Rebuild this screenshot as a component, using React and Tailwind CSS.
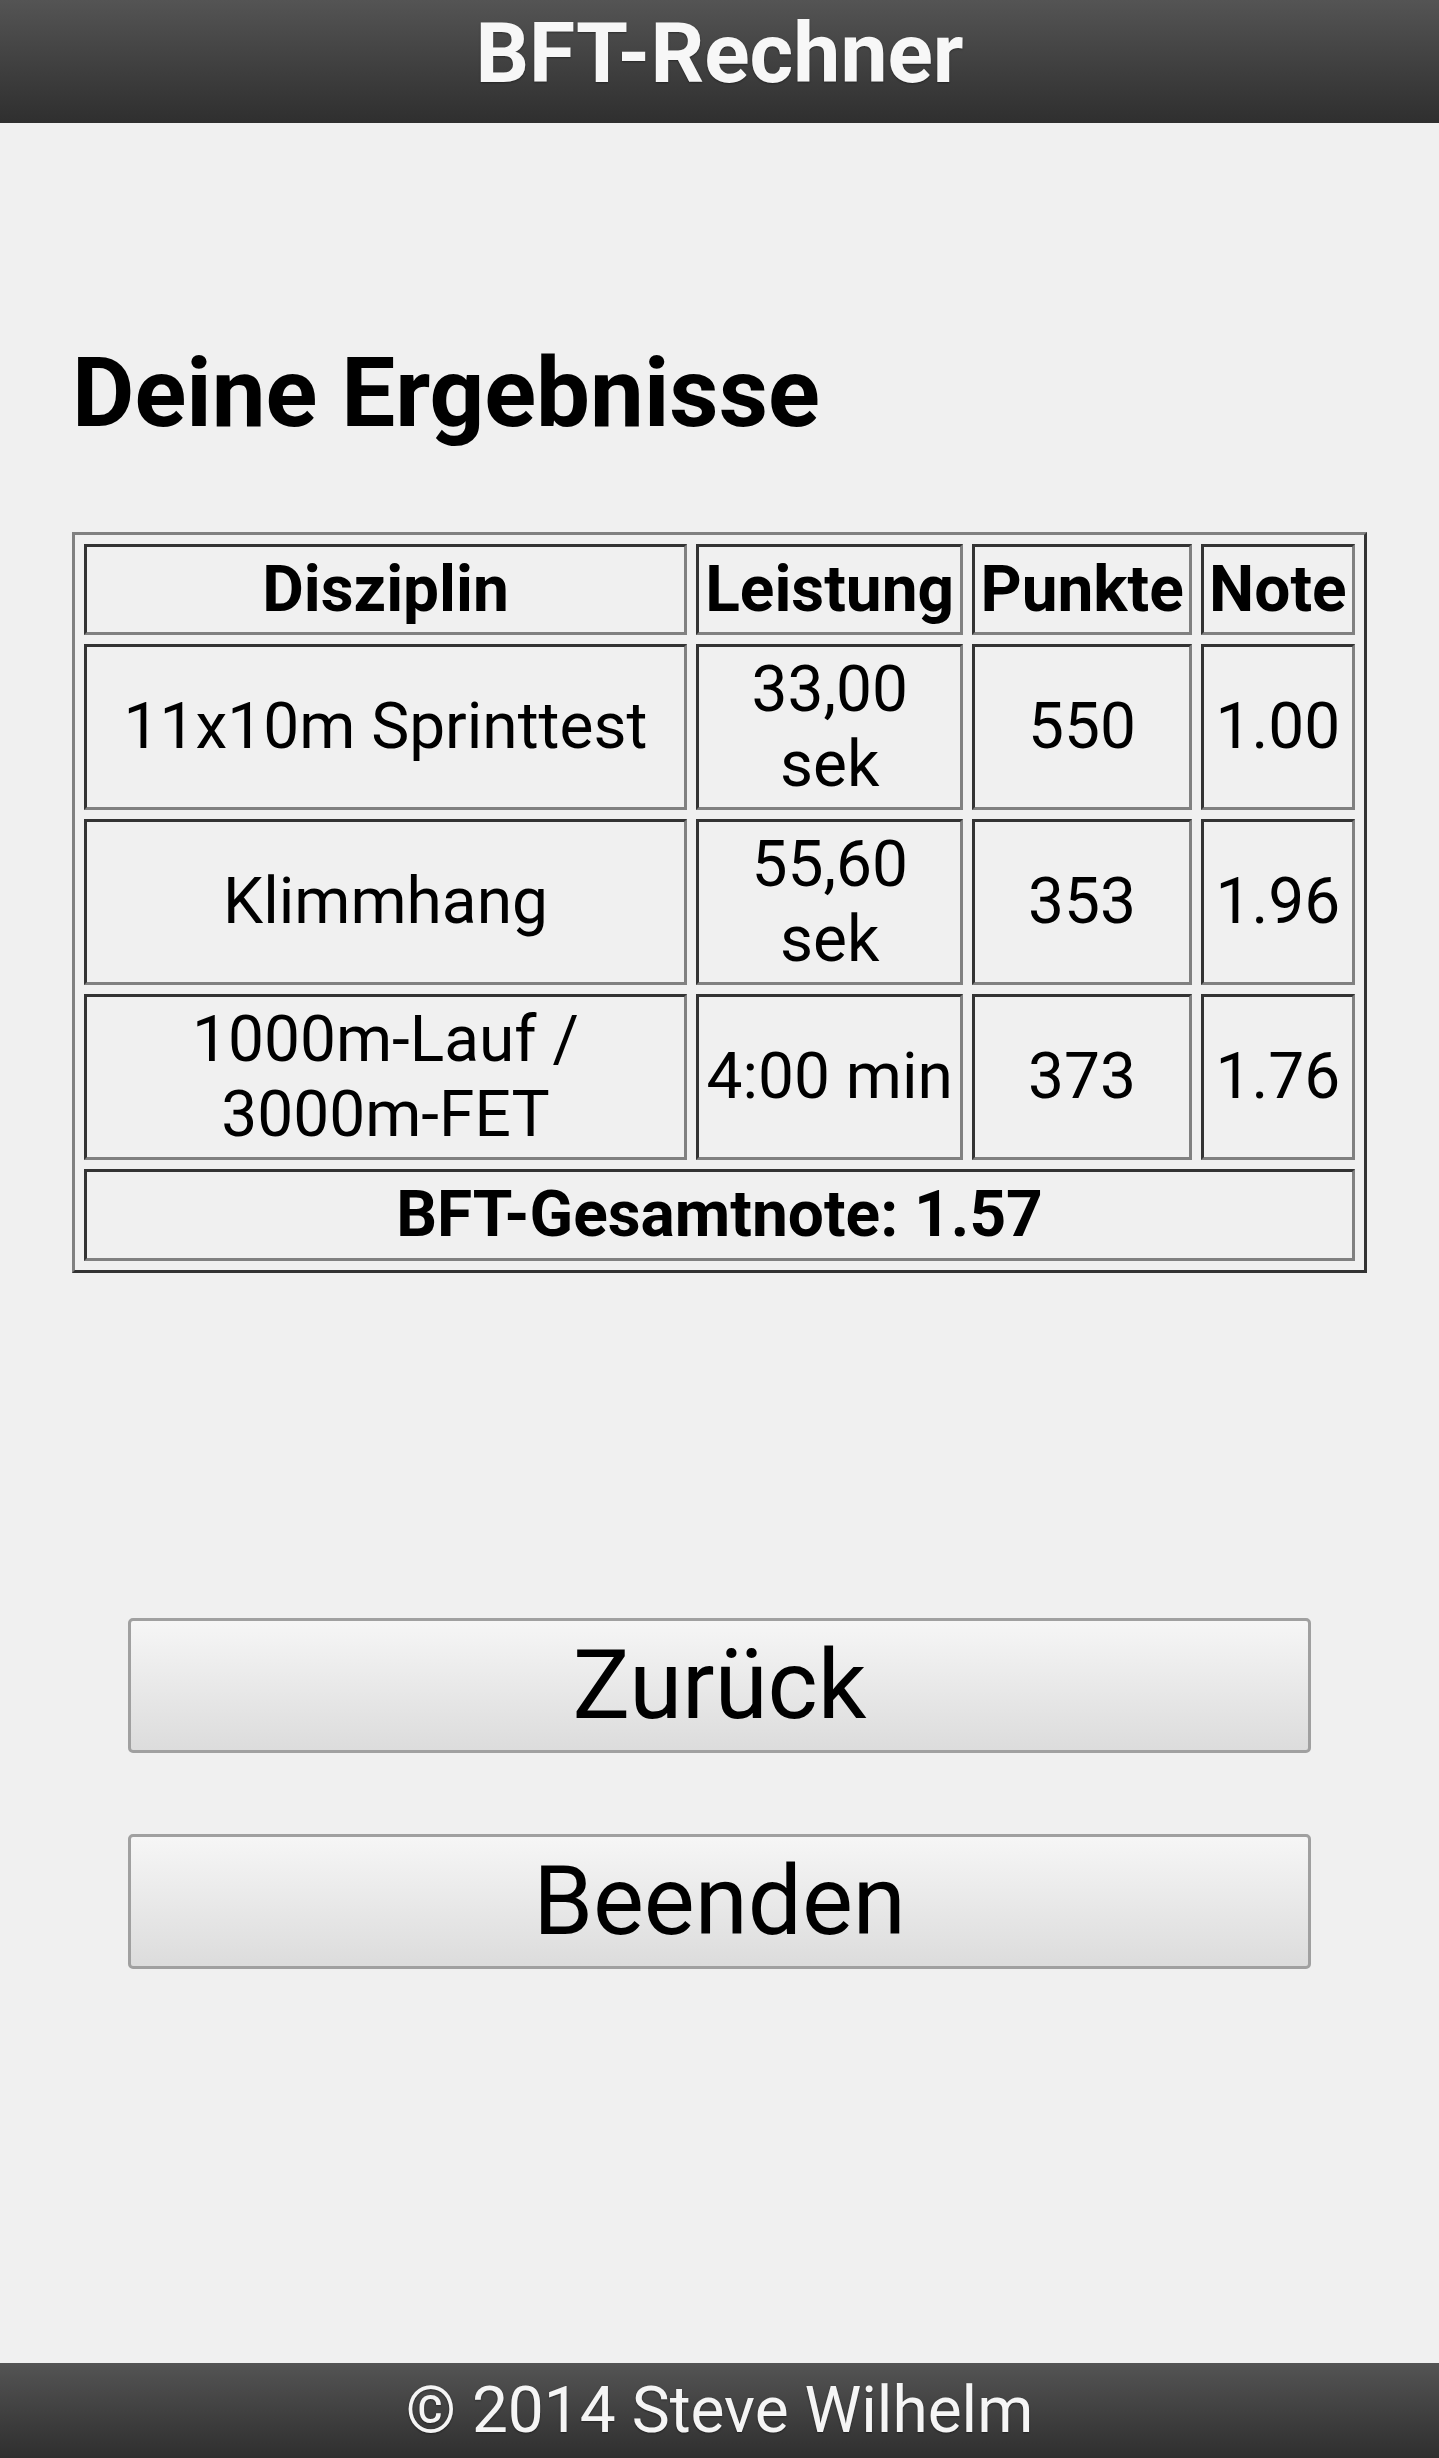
const rows = [
  { name: '11x10m Sprinttest', value: '33,00 sek', points: '550', grade: '1.00' },
  { name: 'Klimmhang', value: '55,60 sek', points: '353', grade: '1.96' },
  { name: '1000m-Lauf / 3000m-FET', value: '4:00 min', points: '373', grade: '1.76' },
];

const cell =
  'border-[3px] border-t-[#333] border-l-[#333] border-r-[#808080] border-b-[#808080] px-[4px] py-[5px] text-center align-middle';

export default function App() {
  return (
    <div className="flex min-h-screen flex-col bg-[#f0f0f0] font-['Roboto',sans-serif] leading-[1.172] text-black">
      <header className="h-[123px] bg-gradient-to-b from-[#545454] to-[#2f2f2f] pt-[5px] text-center">
        <h1 className="text-[84px] font-bold text-[#f7f7f7] [text-shadow:0_1px_2px_rgba(0,0,0,0.4)]">
          BFT-Rechner
        </h1>
      </header>

      <main className="flex-1 px-[72px]">
        <h2 className="mt-[214px] text-[96px] font-bold">Deine Ergebnisse</h2>

        <table className="mt-[82px] w-[1295px] table-fixed border-separate border-spacing-[9px] border-[3px] border-t-[#808080] border-l-[#808080] border-r-[#333] border-b-[#333] text-[64px] leading-[75px]">
          <colgroup>
            <col className="w-[602px]" />
            <col className="w-[267px]" />
            <col className="w-[219px]" />
            <col className="w-[154px]" />
          </colgroup>
          <thead>
            <tr className="h-[91px]">
              <th className={cell + ' font-bold'}>Disziplin</th>
              <th className={cell + ' font-bold'}>Leistung</th>
              <th className={cell + ' font-bold'}>Punkte</th>
              <th className={cell + ' font-bold'}>Note</th>
            </tr>
          </thead>
          <tbody>
            {rows.map((r) => (
              <tr key={r.name} className="h-[166px]">
                <td className={cell}>{r.name}</td>
                <td className={cell}>{r.value}</td>
                <td className={cell}>{r.points}</td>
                <td className={cell}>{r.grade}</td>
              </tr>
            ))}
            <tr className="h-[92px]">
              <td colSpan={4} className={cell + ' font-bold'}>
                BFT-Gesamtnote: 1.57
              </td>
            </tr>
          </tbody>
        </table>

        <div className="mx-[56px] mt-[345px] flex flex-col gap-[81px]">
          <button className="h-[135px] rounded-[5px] border-[3px] border-[#a0a0a0] bg-gradient-to-b from-[#f6f6f6] to-[#dcdcdc] text-[96px] text-black">
            Zurück
          </button>
          <button className="h-[135px] rounded-[5px] border-[3px] border-[#a0a0a0] bg-gradient-to-b from-[#f6f6f6] to-[#dcdcdc] text-[96px] text-black">
            Beenden
          </button>
        </div>
      </main>

      <footer className="flex h-[95px] items-center justify-center bg-gradient-to-b from-[#545454] to-[#2f2f2f]">
        <p className="text-[64px] text-[#f5f5f5] [text-shadow:0_1px_2px_rgba(0,0,0,0.4)]">© 2014 Steve Wilhelm</p>
      </footer>
    </div>
  );
}
